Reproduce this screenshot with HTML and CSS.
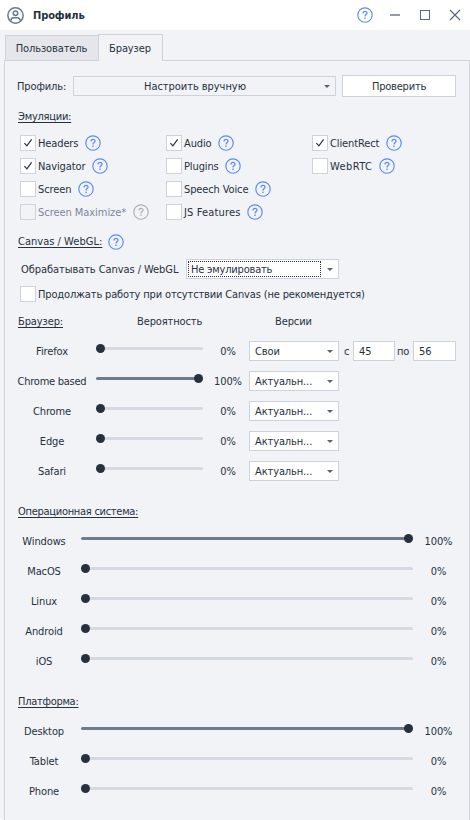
FILE: index.html
```
<!DOCTYPE html>
<html lang="ru">
<head>
<meta charset="utf-8">
<title>Профиль</title>
<link rel="stylesheet" href="styles.css">
</head>
<body>
<svg class="defs" width="0" height="0">
  <symbol id="help" viewBox="0 0 16 16"><circle cx="8" cy="8" r="7.2" fill="none" stroke="currentColor" stroke-width="1.15"/><path d="M6 6.4C6 5.1 6.8 4.3 8 4.3S10 5.1 10 6.2C10 7.6 8 7.6 8 9.4" fill="none" stroke="currentColor" stroke-width="1.25"/><rect x="7.3" y="10.6" width="1.4" height="1.4" fill="currentColor"/></symbol>
  <symbol id="check" viewBox="0 0 14 14"><path d="M3.4 7.2L5.9 9.8L10.6 3.4" fill="none" stroke="#27313d" stroke-width="1.2"/></symbol>
</svg>
<div class="window">
  <header class="titlebar">
    <svg class="user" viewBox="0 0 16 16"><g fill="none" stroke="#6b778d" stroke-width="1.4"><circle cx="8" cy="8" r="7.2"/><circle cx="8" cy="5.9" r="2.1"/><path d="M3.6 12.8C3.8 10.9 5 10.2 6.3 10.2H9.7C11 10.2 12.2 10.9 12.4 12.8"/></g></svg>
    <h1>Профиль</h1>
    <svg class="help"><use href="#help"/></svg>
    <svg class="win" viewBox="0 0 12 12"><path d="M1 6H11" stroke="#969daa" stroke-width="2"/></svg>
    <svg class="win" viewBox="0 0 12 12"><rect x="1.5" y="1.5" width="9" height="9" fill="none" stroke="#5c687b" stroke-width="1"/></svg>
    <svg class="win" viewBox="0 0 12 12"><path d="M1 1L11 11M11 1L1 11" stroke="#5c687b" stroke-width="1.2"/></svg>
  </header>
  <nav class="tabs"><div class="tab">Пользователь</div><div class="tab active">Браузер</div></nav>
  <main class="panel">
    <div class="row profile"><span class="plabel">Профиль:</span><div class="select flat"><span>Настроить вручную</span><i></i></div><button>Проверить</button></div>
    <h2 class="h-emu"><u>Эмуляции:</u></h2>
    <div class="checks">
      <div class="col">
        <label><b><svg><use href="#check"/></svg></b><span>Headers</span><svg class="help"><use href="#help"/></svg></label>
        <label><b><svg><use href="#check"/></svg></b><span>Navigator</span><svg class="help"><use href="#help"/></svg></label>
        <label><b></b><span>Screen</span><svg class="help"><use href="#help"/></svg></label>
        <label class="off"><b></b><span>Screen Maximize*</span><svg class="help"><use href="#help"/></svg></label>
      </div>
      <div class="col">
        <label><b><svg><use href="#check"/></svg></b><span>Audio</span><svg class="help"><use href="#help"/></svg></label>
        <label><b></b><span>Plugins</span><svg class="help"><use href="#help"/></svg></label>
        <label><b></b><span>Speech Voice</span><svg class="help"><use href="#help"/></svg></label>
        <label class="loose"><b></b><span>JS Features</span><svg class="help"><use href="#help"/></svg></label>
      </div>
      <div class="col">
        <label><b><svg><use href="#check"/></svg></b><span>ClientRect</span><svg class="help"><use href="#help"/></svg></label>
        <label class="looser"><b></b><span>WebRTC</span><svg class="help"><use href="#help"/></svg></label>
      </div>
    </div>
    <h2 class="h-canvas"><u>Canvas / WebGL:</u><svg class="help"><use href="#help"/></svg></h2>
    <div class="row canvas"><span class="clabel">Обрабатывать Canvas / WebGL</span><div class="select focus"><span>Не эмулировать</span><i></i></div></div>
    <label class="resume"><b></b><span>Продолжать работу при отсутствии Canvas (не рекомендуется)</span></label>
    <div class="row heads"><u>Браузер:</u><span class="prob">Вероятность</span><span class="ver">Версии</span></div>
    <div class="row browser"><span class="name">Firefox</span><div class="slider"></div><span class="pct">0%</span><div class="select"><span>Свои</span><i></i></div><span class="from">с</span><div class="num n1">45</div><span class="to">по</span><div class="num n2">56</div></div>
    <div class="row browser"><span class="name tight">Chrome based</span><div class="slider full"></div><span class="pct">100%</span><div class="select"><span>Актуальн...</span><i></i></div></div>
    <div class="row browser"><span class="name">Chrome</span><div class="slider"></div><span class="pct">0%</span><div class="select"><span>Актуальн...</span><i></i></div></div>
    <div class="row browser"><span class="name">Edge</span><div class="slider"></div><span class="pct">0%</span><div class="select"><span>Актуальн...</span><i></i></div></div>
    <div class="row browser"><span class="name">Safari</span><div class="slider"></div><span class="pct">0%</span><div class="select"><span>Актуальн...</span><i></i></div></div>
    <h2 class="h-group"><u>Операционная система:</u></h2>
    <div class="row wide"><span class="name">Windows</span><div class="slider full"></div><span class="pct">100%</span></div>
    <div class="row wide"><span class="name">MacOS</span><div class="slider"></div><span class="pct">0%</span></div>
    <div class="row wide"><span class="name">Linux</span><div class="slider"></div><span class="pct">0%</span></div>
    <div class="row wide"><span class="name">Android</span><div class="slider"></div><span class="pct">0%</span></div>
    <div class="row wide"><span class="name">iOS</span><div class="slider"></div><span class="pct">0%</span></div>
    <h2 class="h-group"><u>Платформа:</u></h2>
    <div class="row wide"><span class="name">Desktop</span><div class="slider full"></div><span class="pct">100%</span></div>
    <div class="row wide"><span class="name">Tablet</span><div class="slider"></div><span class="pct">0%</span></div>
    <div class="row wide"><span class="name">Phone</span><div class="slider"></div><span class="pct">0%</span></div>
  </main>
</div>
</body>
</html>
```
FILE: styles.css
```
* { box-sizing: border-box; }
body { margin: 0; background: #fff; color: #27313d; font: 11px/14px "DejaVu Sans Condensed", "DejaVu Sans", sans-serif; font-stretch: condensed; letter-spacing: -0.12px; white-space: nowrap; }
.defs { position: absolute; }
.window { width: 470px; height: 820px; overflow: hidden; display: flex; flex-direction: column; background: #f1f3f7; border-bottom-left-radius: 3px; }
.titlebar { height: 30px; flex: none; background: #fff; display: flex; align-items: center; padding-left: 7px; }
.user { width: 17px; height: 17px; }
h1 { margin: 0 auto 0 9px; padding-top: 2px; font-size: 11px; line-height: 14px; font-weight: bold; }
.help { width: 16px; height: 16px; color: #5a8cf8; flex: none; }
.win { width: 12px; height: 12px; margin-left: 18px; }
.titlebar .help + .win { margin-left: 16px; }
.titlebar .win:last-child { margin-right: 9px; }
.tabs { height: 31px; flex: none; display: flex; align-items: flex-end; padding: 0 0 0 5px; margin-bottom: -1px; position: relative; }
.tab { width: 94px; height: 26px; border: 1px solid #cdd2db; background: #e4e6eb; display: flex; align-items: center; justify-content: center; padding: 2px 1px 0 0; }
.tab.active { width: 65px; height: 27px; margin-left: -1px; border-bottom: 0; background: #f1f3f7; padding-top: 1px; }
.panel { flex: 1; margin-left: 4px; border: 1px solid #cdd2db; border-bottom: 0; padding-top: 10px; }
.row { display: flex; align-items: center; height: 30px; }
.row > span, .select > span, label > span { padding-top: 2px; }
.profile { padding-left: 12px; }
.plabel { width: 56px; }
.select { height: 20px; width: 90px; border: 1px solid #cdd2db; background: #fff; display: flex; align-items: center; padding: 0 5px; }
.select span { flex: 1; }
.select i { width: 0; height: 0; border: 3px solid transparent; border-top-color: #59636f; border-bottom: 0; }
.flat { width: 263px; background: transparent; text-align: center; }
.flat span { padding-right: 13px; letter-spacing: -0.05px; }
button { width: 114px; height: 22px; margin-left: 6px; padding: 1px 0 0; border: 1px solid #cdd2db; background: #fff; font: inherit; letter-spacing: -0.2px; color: inherit; }
h2 { margin: 0; font-size: 11px; font-weight: normal; display: flex; align-items: center; padding-left: 13px; }
u { text-underline-offset: 2px; text-decoration-thickness: 1px; text-decoration-skip-ink: none; }
.h-emu { height: 30px; padding-top: 2px; letter-spacing: -0.25px; }
.checks { display: flex; padding-left: 15px; height: 92px; }
.col { width: 146px; }
label { display: flex; align-items: center; height: 23px; }
label b { width: 16px; height: 16px; border: 1px solid #cdd2db; background: #fff; margin-right: 2px; flex: none; }
label b svg { width: 14px; height: 14px; display: block; }
label .help { margin-left: 6.5px; }
.loose { letter-spacing: 0.16px; }
.looser { letter-spacing: 0.42px; }
.off { color: #7c879b; letter-spacing: -0.05px; }
.off b { background: transparent; }
.off .help { color: #adb0b5; }
.h-canvas { height: 31px; padding-top: 7px; letter-spacing: 0.02px; }
.h-canvas .help { margin-left: 6px; }
.canvas { padding-left: 16px; }
.clabel { width: 165px; letter-spacing: -0.07px; }
.focus { width: 153px; padding: 0 5px 0 1px; }
.select.focus span { flex: none; width: 133px; height: 16px; border: 1px dotted #27313d; padding: 0 0 0 2px; margin-right: 6px; line-height: 15px; letter-spacing: -0.2px; }
.resume { height: 19px; padding-left: 15px; margin-bottom: 3px; letter-spacing: -0.15px; }
.heads { padding-left: 13px; }
.heads u { width: 119px; padding-top: 1px; }
.heads .prob { width: 138px; }
.name { text-align: center; flex: none; }
.name.tight { letter-spacing: -0.25px; }
.pct { text-align: center; flex: none; }
.browser .name { width: 94px; margin-right: -3px; }
.browser .slider { width: 107px; }
.browser .pct { width: 50px; margin-right: -4px; }
.slider { height: 3px; border-radius: 2px; background: #d5dae2; display: flex; align-items: center; margin-top: -5px; flex: none; }
.slider::before { content: ""; width: 9px; height: 9px; border-radius: 50%; background: #27313d; }
.slider.full { background: #6f7a8f; justify-content: flex-end; }
.from { width: 14px; padding-left: 5px; }
.to { width: 18px; padding-left: 2px; }
.num { height: 20px; border: 1px solid #cdd2db; background: #fff; padding: 3px 5px; }
.n1 { width: 42px; }
.n2 { width: 43px; }
.h-group { height: 30px; margin-top: 10px; padding-top: 2px; letter-spacing: -0.28px; }
.wide .name { width: 78px; margin-right: -2px; }
.wide .slider { width: 332px; }
.wide .pct { width: 51px; }
```
